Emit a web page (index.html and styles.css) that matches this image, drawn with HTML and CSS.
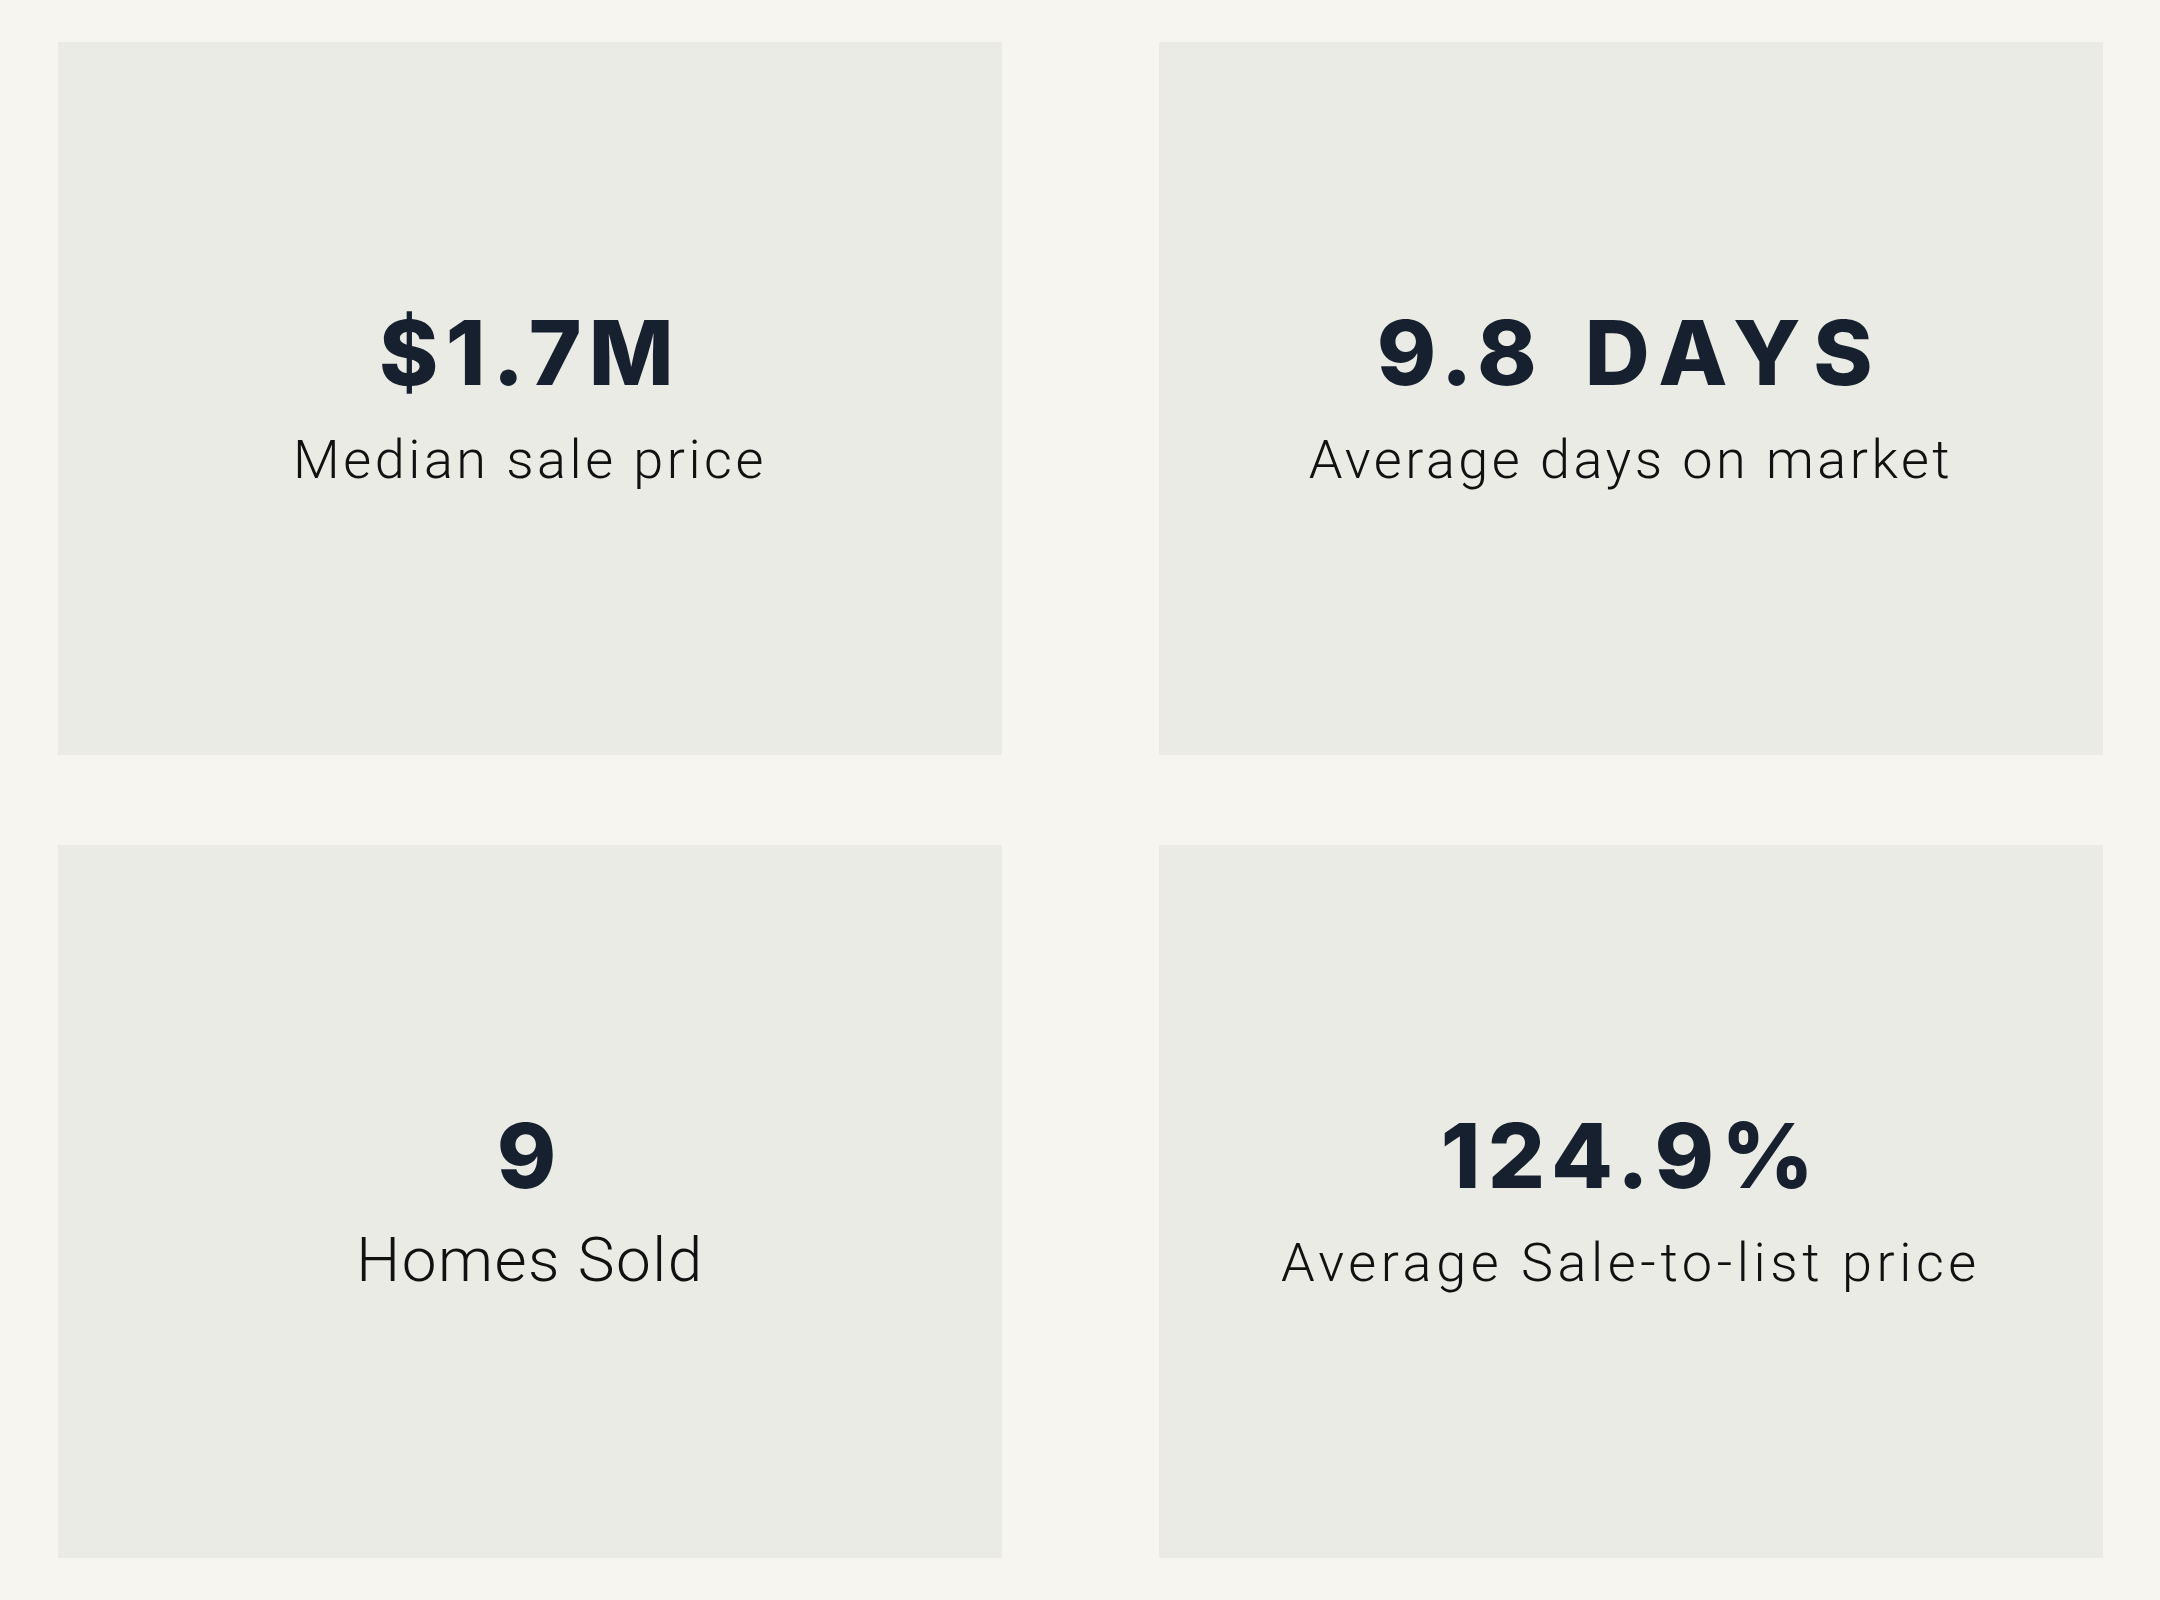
FILE: index.html
```html
<!DOCTYPE html>
<html lang="en">
<head>
<meta charset="utf-8">
<title>Market stats</title>
<link rel="stylesheet" href="styles.css">
</head>
<body>
<main class="stats">
  <section class="card">
    <div class="value">$1.7M</div>
    <div class="label">Median sale price</div>
  </section>
  <section class="card">
    <div class="value value-words">9.8 <span class="unit">DAYS</span></div>
    <div class="label">Average days on market</div>
  </section>
  <section class="card">
    <div class="value">9</div>
    <div class="label label-lg">Homes Sold</div>
  </section>
  <section class="card">
    <div class="value">124.9%</div>
    <div class="label label-long">Average Sale-to-list price</div>
  </section>
</main>
</body>
</html>
```
FILE: styles.css
```css
html, body {
  margin: 0;
  padding: 0;
  background: #f6f5f0;
}

.stats {
  display: grid;
  grid-template-columns: 944px 944px;
  grid-auto-rows: 713px;
  column-gap: 157px;
  row-gap: 90px;
  padding: 42px 58px 43px 58px;
}

.card {
  background: #ebebe5;
  display: flex;
  flex-direction: column;
  align-items: center;
  justify-content: center;
}

.value {
  font-family: "Inter", "DejaVu Sans", sans-serif;
  font-weight: 800;
  font-size: 90px;
  line-height: 90px;
  letter-spacing: 0.08em;
  color: #16202e;
}

.value-words {
  word-spacing: 14px;
}

.unit {
  letter-spacing: 0.14em;
}

.label {
  margin-top: 32px;
  font-family: "Roboto", "Noto Sans", sans-serif;
  font-weight: 300;
  font-size: 54px;
  line-height: 60px;
  letter-spacing: 0.065em;
  color: #111111;
}

.label-long {
  letter-spacing: 0.085em;
}

.label-lg {
  margin-top: 26px;
  font-size: 62px;
  line-height: 66px;
  letter-spacing: 0.025em;
}
```
